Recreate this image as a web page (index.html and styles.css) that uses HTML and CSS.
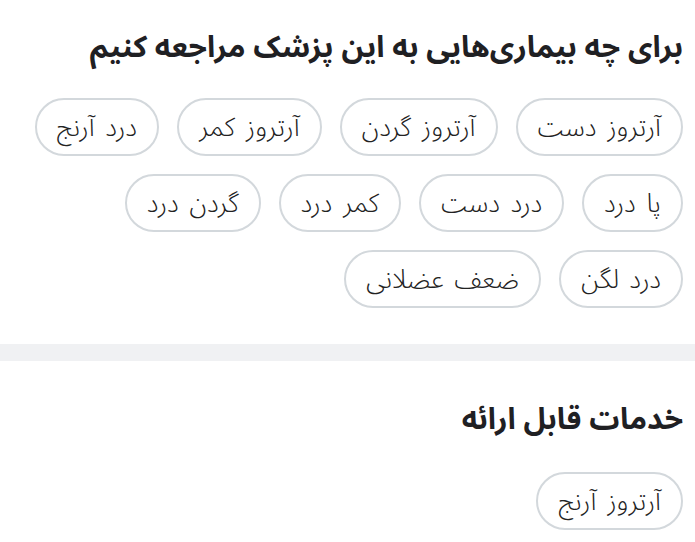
FILE: index.html
```html
<!DOCTYPE html>
<html lang="fa" dir="rtl">
<head>
<meta charset="utf-8">
<link rel="stylesheet" href="styles.css">
</head>
<body>
<section class="block block-top">
  <h2 class="title">برای چه بیماری‌هایی به این پزشک مراجعه کنیم</h2>
  <div class="chips">
    <span class="chip">آرتروز دست</span>
    <span class="chip">آرتروز گردن</span>
    <span class="chip">آرتروز کمر</span>
    <span class="chip">درد آرنج</span>
    <span class="chip">پا درد</span>
    <span class="chip">درد دست</span>
    <span class="chip">کمر درد</span>
    <span class="chip">گردن درد</span>
    <span class="chip">درد لگن</span>
    <span class="chip">ضعف عضلانی</span>
  </div>
</section>
<div class="divider"></div>
<section class="block block-bottom">
  <h2 class="title">خدمات قابل ارائه</h2>
  <div class="chips">
    <span class="chip">آرتروز آرنج</span>
  </div>
</section>
</body>
</html>
```
FILE: styles.css
```css
html, body {
  margin: 0;
  padding: 0;
  background: #fff;
}
body {
  font-family: "Noto Sans Arabic", "DejaVu Sans", sans-serif;
  color: #1f2023;
  width: 695px;
}
.block {
  padding: 0 12px 0 12px;
}
.block-top {
  padding-top: 26px;
  padding-bottom: 36px;
}
.block-bottom {
  padding-top: 37px;
}
.title {
  margin: 0;
  font-size: 30px;
  font-weight: 700;
  line-height: 44px;
}
.chips {
  margin-top: 28px;
  display: flex;
  flex-wrap: wrap;
  gap: 18px;
}
.block-bottom .chips {
  margin-top: 30px;
}
.chip {
  box-sizing: border-box;
  height: 58px;
  display: inline-flex;
  align-items: center;
  padding: 0 20px;
  border: 2px solid #d3d8dc;
  border-radius: 999px;
  font-size: 26px;
  font-weight: 300;
  word-spacing: 4px;
  color: #222;
}
.divider {
  height: 17px;
  background: #f0f1f3;
}
```
